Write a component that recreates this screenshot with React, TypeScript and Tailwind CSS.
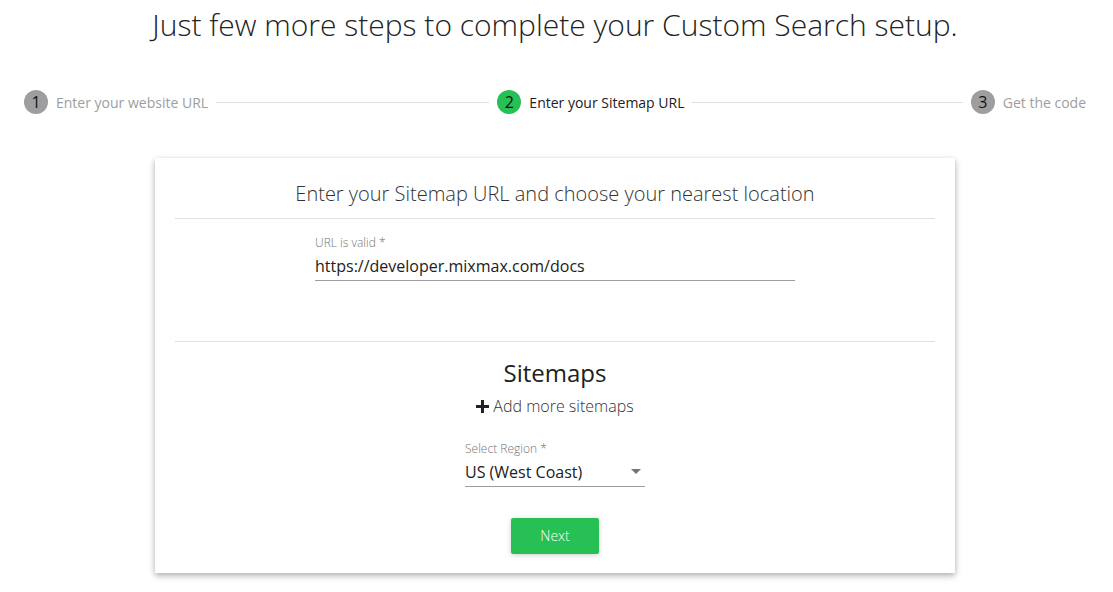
import { useState } from "react"

const steps = [
  { n: 1, label: "Enter your website URL", state: "done" },
  { n: 2, label: "Enter your Sitemap URL", state: "active" },
  { n: 3, label: "Get the code", state: "todo" },
]

export default function App() {
  const [url, setUrl] = useState("https://developer.mixmax.com/docs")

  return (
    <div className="min-h-screen w-[1110px] bg-white font-['Open_Sans',sans-serif] text-[#212121]">
      {/* Heading */}
      <h1 className="pt-[5px] text-center text-[30px] leading-[40px] font-light text-[#222]">
        Just few more steps to complete your Custom Search setup.
      </h1>

      {/* Stepper */}
      <div className="mt-[21px] flex h-[72px] items-center px-6">
        {steps.map((step, i) => (
          <div key={step.n} className={i < steps.length - 1 ? "flex flex-1 items-center" : "flex items-center"}>
            <div className="flex items-center">
              <span
                className={
                  step.state === "active"
                    ? "flex h-6 w-6 items-center justify-center rounded-full bg-[#26c055] text-[16px] text-[#111]"
                    : "flex h-6 w-6 items-center justify-center rounded-full bg-[#9e9e9e] text-[16px] text-[#111]"
                }
              >
                {step.n}
              </span>
              <span
                className={
                  step.state === "active"
                    ? "ml-2 text-[14px] text-[#212121]"
                    : "ml-2 text-[14px] text-[#9e9e9e]"
                }
              >
                {step.label}
              </span>
            </div>
            {i < steps.length - 1 && <div className="mx-2 flex-1 border-t border-[#e0e0e0]" />}
          </div>
        ))}
      </div>

      {/* Card */}
      <div className="mx-auto mt-5 w-[800px] bg-white px-5 pb-[19px] shadow-[0_3px_8px_rgba(0,0,0,0.16),0_2px_5px_rgba(0,0,0,0.2)]">
        <div className="border-b border-[#e0e0e0] pt-[22px] pb-[10px] text-center text-[20px] leading-[28px] font-light text-[#333]">
          Enter your Sitemap URL and choose your nearest location
        </div>

        <div className="mx-auto mt-[16px] w-[480px]">
          <label className="block text-[12px] leading-[16px] font-light text-[#757575]">URL is valid *</label>
          <input
            value={url}
            onChange={(e) => setUrl(e.target.value)}
            className="mt-[4px] block h-[26px] w-full border-b border-[#9e9e9e] bg-transparent pb-[3px] text-[16px] text-[#212121] outline-none"
          />
        </div>

        <div className="mt-[60px] border-t border-[#e0e0e0]" />

        <div className="pt-[15px] text-center">
          <div className="text-[24px] leading-[32px] text-[#212121]">Sitemaps</div>
          <button className="mt-[5px] inline-flex items-center text-[16px] leading-[24px] font-light text-[#333]">
            <svg width="13" height="13" viewBox="0 0 12 12" className="mr-[4px]">
              <path d="M4.6 0h2.8v4.6H12v2.8H7.4V12H4.6V7.4H0V4.6h4.6z" fill="#212121" />
            </svg>
            Add more sitemaps
          </button>
        </div>

        <div className="mx-auto mt-[22px] w-[180px]">
          <label className="block text-[12px] leading-[16px] font-light text-[#757575]">Select Region *</label>
          <div className="mt-[3px] flex h-[27px] items-center justify-between border-b border-[#9e9e9e] pb-[2px]">
            <span className="text-[16px] text-[#212121]">US (West Coast)</span>
            <svg width="10" height="5" viewBox="0 0 10 5" className="mr-[4px]">
              <path d="M0 0l5 5 5-5z" fill="#757575" />
            </svg>
          </div>
        </div>

        <div className="mt-[31px] flex justify-center">
          <button className="h-[36px] w-[88px] rounded-[2px] bg-[#26c055] text-[14px] font-light text-white shadow-[0_1px_5px_rgba(0,0,0,0.2)]">
            Next
          </button>
        </div>
      </div>
    </div>
  )
}
